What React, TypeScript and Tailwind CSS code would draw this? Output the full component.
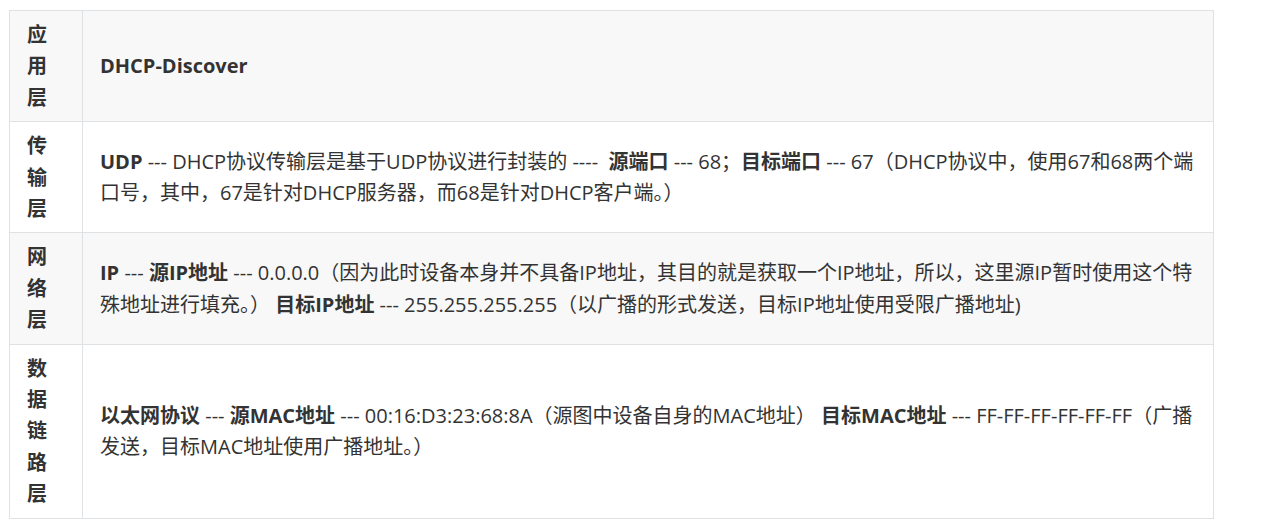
import React from "react"

const rows: { layer: string; content: React.ReactNode }[] = [
  {
    layer: "应用层",
    content: <b className="font-bold">DHCP-Discover</b>,
  },
  {
    layer: "传输层",
    content: (
      <>
        <b className="font-bold">UDP</b> --- DHCP协议传输层是基于UDP协议进行封装的 ----&nbsp; <b className="font-bold">源端口</b> --- 68；
        <b className="font-bold">目标端口</b> --- 67（DHCP协议中，使用67和68两个端口号，其中，67是针对DHCP服务器，而68是针对DHCP客户端。）
      </>
    ),
  },
  {
    layer: "网络层",
    content: (
      <>
        <b className="font-bold">IP</b> --- <b className="font-bold">源IP地址</b> --- 0.0.0.0（因为此时设备本身并不具备IP地址，其目的就是获取一个IP地址，所以，这里源IP暂时使用这个特殊地址进行填充。）{" "}
        <b className="font-bold">目标IP地址</b> --- 255.255.255.255（以广播的形式发送，目标IP地址使用受限广播地址)
      </>
    ),
  },
  {
    layer: "数据链路层",
    content: (
      <>
        <b className="font-bold">以太网协议</b> --- <b className="font-bold">源MAC地址</b> --- 00:16:D3:23:68:8A（源图中设备自身的MAC地址）{" "}
        <b className="font-bold">目标MAC地址</b> --- FF-FF-FF-FF-FF-FF（广播发送，目标MAC地址使用广播地址。）
      </>
    ),
  },
]

export default function App() {
  return (
    <div
      className="min-h-[532px] bg-white pt-[10px] pl-[9px] text-[#333]"
      style={{ fontFamily: '"Open Sans", "Noto Sans CJK SC", sans-serif' }}
    >
      <table className="w-[1205px] border-collapse text-[20px] leading-[31.4px]">
        <tbody>
          {rows.map((r, i) => (
            <tr key={i} className={i % 2 === 0 ? "bg-[#f8f8f8]" : "bg-white"}>
              <td className="w-[73px] border border-[#dfe2e5] px-[17px] py-[8px] align-middle font-bold">
                {r.layer.split("").map((c, j) => (
                  <div key={j}>{c}</div>
                ))}
              </td>
              <td className="border border-[#dfe2e5] pl-[17px] pr-[18px] py-[8px] align-middle">{r.content}</td>
            </tr>
          ))}
        </tbody>
      </table>
    </div>
  )
}
